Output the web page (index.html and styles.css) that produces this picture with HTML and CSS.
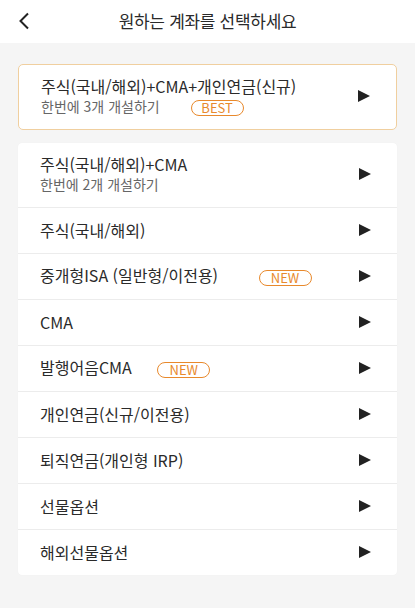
FILE: index.html
```html
<!DOCTYPE html>
<html lang="ko">
<head>
    <meta charset="UTF-8">
    <meta name="viewport" content="width=device-width, initial-scale=1.0">
    <title>계좌 선택</title>
    <link rel="stylesheet" href="styles.css">
</head>
<body>
    <header class="top-bar">
        <button class="back-btn" aria-label="뒤로">
            <svg width="12" height="18" viewBox="0 0 12 18"><path d="M10 1.5 L2.5 9 L10 16.5" fill="none" stroke="#222" stroke-width="2"/></svg>
        </button>
        <h1>원하는 계좌를 선택하세요</h1>
    </header>

    <main class="content">
        <div class="card card-best">
            <div class="row row-tall">
                <div class="row-text">
                    <div class="row-title">주식(국내/해외)+CMA+개인연금(신규)</div>
                    <div class="row-sub">한번에 3개 개설하기 <span class="badge badge-best">BEST</span></div>
                </div>
                <span class="arrow"></span>
            </div>
        </div>

        <div class="card">
            <div class="row row-tall">
                <div class="row-text">
                    <div class="row-title">주식(국내/해외)+CMA</div>
                    <div class="row-sub">한번에 2개 개설하기</div>
                </div>
                <span class="arrow"></span>
            </div>
            <div class="row">
                <div class="row-title">주식(국내/해외)</div>
                <span class="arrow"></span>
            </div>
            <div class="row">
                <div class="row-title">중개형ISA (일반형/이전용) <span class="badge badge-isa">NEW</span></div>
                <span class="arrow"></span>
            </div>
            <div class="row">
                <div class="row-title">CMA</div>
                <span class="arrow"></span>
            </div>
            <div class="row">
                <div class="row-title">발행어음CMA <span class="badge badge-cma">NEW</span></div>
                <span class="arrow"></span>
            </div>
            <div class="row">
                <div class="row-title">개인연금(신규/이전용)</div>
                <span class="arrow"></span>
            </div>
            <div class="row">
                <div class="row-title">퇴직연금(개인형 IRP)</div>
                <span class="arrow"></span>
            </div>
            <div class="row">
                <div class="row-title">선물옵션</div>
                <span class="arrow"></span>
            </div>
            <div class="row">
                <div class="row-title">해외선물옵션</div>
                <span class="arrow"></span>
            </div>
        </div>
    </main>
</body>
</html>
```

FILE: styles.css
```css
body {
    margin: 0;
    font-family: "Noto Sans CJK KR", "Noto Sans", sans-serif;
    background-color: #f5f5f5;
    color: #2a2a2a;
    height: 608px;
}

.top-bar {
    position: relative;
    height: 43px;
    box-sizing: border-box;
    padding-bottom: 3px;
    background-color: #fff;
    display: flex;
    align-items: center;
    justify-content: center;
}

.top-bar h1 {
    margin: 0;
    font-size: 17px;
    font-weight: 400;
    letter-spacing: -0.3px;
}

.back-btn {
    position: absolute;
    left: 16px;
    top: 10px;
    border: none;
    background: none;
    padding: 2px;
}

.content {
    padding: 21px 18px;
}

.card {
    background-color: #fff;
    border-radius: 4px;
    margin-bottom: 13px;
    box-shadow: 0 0 1px rgba(0, 0, 0, 0.06);
}

.card-best {
    border: 1px solid #f0cf9f;
    border-radius: 5px;
    box-shadow: none;
}

.card-best .row-tall {
    height: 64px;
    padding-bottom: 3px;
}

.row {
    display: flex;
    align-items: center;
    justify-content: space-between;
    box-sizing: border-box;
    height: 46px;
    padding: 0 26px 2px 22px;
    border-top: 1px solid #ececec;
}

.row:first-child {
    border-top: none;
}

.row-tall {
    height: 64px;
}

.row-title {
    font-size: 16px;
    line-height: 20px;
}

.row-sub {
    font-size: 14px;
    color: #666;
    line-height: 20px;
}

.badge {
    display: inline-block;
    border: 1px solid #e8892c;
    color: #e8892c;
    border-radius: 8px;
    font-size: 13px;
    line-height: 14px;
    width: 51px;
    text-align: center;
    vertical-align: -1px;
}

.badge-best {
    margin-left: 27px;
}

.badge-isa {
    margin-left: 36px;
}

.badge-cma {
    margin-left: 21px;
}

.arrow {
    width: 0;
    height: 0;
    border-top: 6px solid transparent;
    border-bottom: 6px solid transparent;
    border-left: 12px solid #222;
}
```
